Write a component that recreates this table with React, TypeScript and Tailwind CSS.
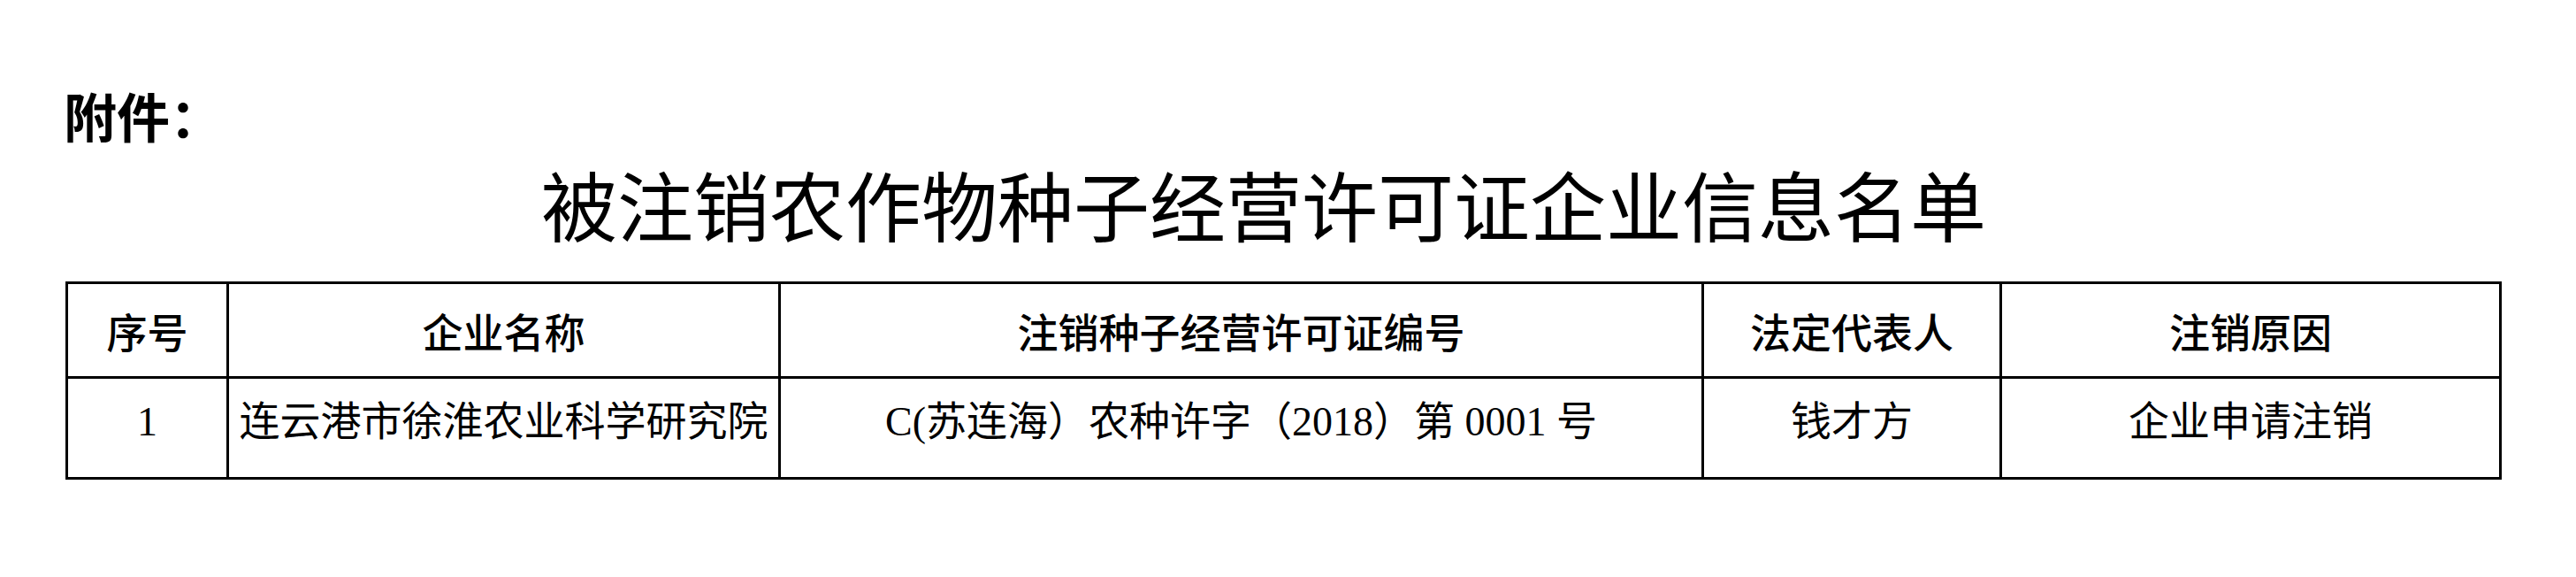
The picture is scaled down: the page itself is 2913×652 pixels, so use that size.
import React from "react";

const cjk = "font-['Noto_Sans_CJK_SC',sans-serif]";
const serifCjk = "font-['Liberation_Serif','Noto_Sans_CJK_SC',serif]";

const headers = ["序号", "企业名称", "注销种子经营许可证编号", "法定代表人", "注销原因"];
const row = [
  "1",
  "连云港市徐淮农业科学研究院",
  "C(苏连海）农种许字（2018）第 0001 号",
  "钱才方",
  "企业申请注销",
];

export default function App() {
  return (
    <div className={`w-[2913px] h-[652px] bg-white text-black ${cjk}`}>
      <div className="pt-[100px] pl-[72px] text-[60px] leading-[60px] font-bold">附件：</div>
      <div className="pt-[27px] pl-[612px] text-[86px] leading-[86px] font-normal whitespace-nowrap">
        被注销农作物种子经营许可证企业信息名单
      </div>
      <div className="mt-[45px] ml-[74px] w-[2755px] grid grid-cols-[182px_624px_1044px_337px_565px] border-l-[3px] border-t-[3px] border-black">
        {headers.map((h) => (
          <div
            key={h}
            className="h-[107px] border-r-[3px] border-b-[3px] border-black flex items-center justify-center text-[46px] leading-[46px] font-medium whitespace-nowrap"
          >
            {h}
          </div>
        ))}
        {row.map((c, i) => (
          <div
            key={i}
            className={`h-[114px] border-r-[3px] border-b-[3px] border-black flex items-center justify-center pb-[14px] text-[46px] leading-[46px] whitespace-nowrap ${serifCjk}`}
          >
            {c}
          </div>
        ))}
      </div>
    </div>
  );
}
